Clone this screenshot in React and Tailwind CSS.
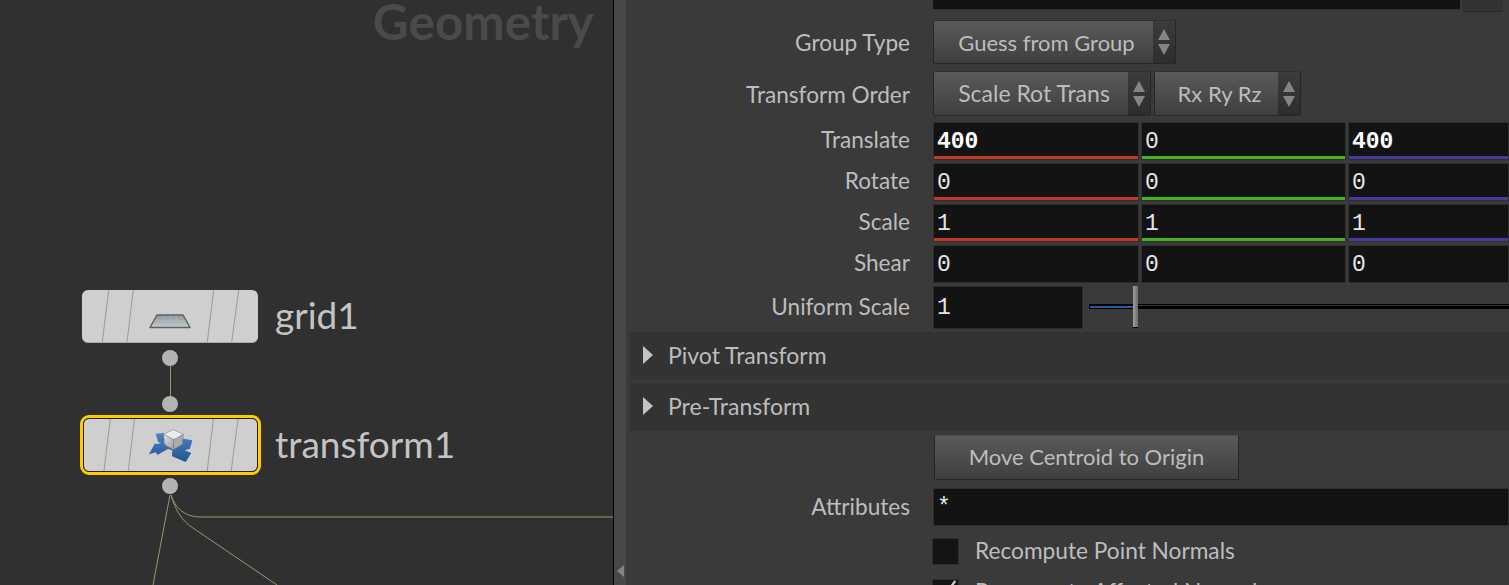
import React from 'react';

const sans = "font-['Lato',sans-serif]";
const mono = "font-['Liberation_Mono',monospace]";

// slanted strokes on a network node body
const Stripes = () => (
  <svg className="absolute inset-0 w-full h-full" viewBox="0 0 176 53" preserveAspectRatio="none">
    <path d="M26.7 0L20.3 53M51.3 0L45 53M131.7 0L125.3 53M156.7 0L149.7 53" stroke="#9a9a9a" strokeWidth="1" fill="none" />
  </svg>
);

const GridIcon = () => (
  <svg className="absolute left-[66px] top-[23px] w-[44px] h-[16px]" viewBox="0 0 44 16">
    <defs>
      <linearGradient id="gridFill" x1="0" y1="0" x2="0" y2="1">
        <stop offset="0" stopColor="#8e979c" />
        <stop offset="1" stopColor="#c6ccd0" />
      </linearGradient>
    </defs>
    <path d="M9 2H35L42 14.5H2Z" fill="url(#gridFill)" stroke="#606060" strokeWidth="1.5" strokeLinejoin="round" />
    <path d="M16 2.5L14 14M22 2.5V14M28 2.5L30 14M6 8H38" stroke="#b4babe" strokeWidth="0.6" fill="none" />
  </svg>
);

const TransformIcon = () => (
  <svg className="absolute left-[60px] top-[8px] w-[56px] h-[36px]" viewBox="40 20 168 108">
    <defs>
      <linearGradient id="cubeLeft" x1="0" y1="0" x2="1" y2="1">
        <stop offset="0" stopColor="#e6e6e6" />
        <stop offset="1" stopColor="#9c9c9c" />
      </linearGradient>
      <linearGradient id="planeBlue" x1="0" y1="0" x2="0" y2="1">
        <stop offset="0" stopColor="#4c82c4" />
        <stop offset="1" stopColor="#23558f" />
      </linearGradient>
    </defs>
    <path d="M100 38L75 40L82 64L90 70L72 70L55 102L76 96L80 104L112 86L125 90L124 108L165 125L182 98L162 90L178 85L185 60L150 54L150 70L100 70Z" fill="url(#planeBlue)" />
    <path d="M98 42L128 28L158 42L130 58Z" fill="#ededed" stroke="#777" strokeWidth="1.5" />
    <path d="M98 42L130 58L128 88L105 75Z" fill="url(#cubeLeft)" stroke="#777" strokeWidth="1.5" />
    <path d="M130 58L158 42L155 72L128 88Z" fill="#a9adb0" stroke="#777" strokeWidth="1.5" />
  </svg>
);

const Dot = ({ className }) => (
  <div className={`absolute w-[16px] h-[16px] rounded-full bg-[#b3b3b3] ${className}`} />
);

const Network = () => (
  <div className={`relative w-[613px] h-full shrink-0 bg-[#303030] overflow-hidden ${sans}`}>
    <div className="absolute right-[19px] top-[-9px] text-[49.5px] leading-[60px] font-bold text-[#4a4a4a]">Geometry</div>

    <svg className="absolute inset-0 w-[613px] h-[585px]" viewBox="0 0 613 585" fill="none" stroke="#8a9f68" strokeWidth="1">
      <path d="M170.5 366V397" />
      <path d="M170 495L153 585" />
      <path d="M171 495C175 508 185 517 200 517H613" />
      <path d="M171 495C175 510 183 522 193 528L277 585" />
    </svg>

    <div className="absolute left-[82px] top-[290px] w-[176px] h-[53px] rounded-[6px] bg-[#cfcfcf] overflow-hidden border-b border-[#a8a8a8]">
      <Stripes />
      <GridIcon />
    </div>
    <div className="absolute left-[275px] top-[289px] text-[37px] leading-[52px] text-[#c4c4c4]">grid1</div>
    <Dot className="left-[162px] top-[350px]" />
    <Dot className="left-[162px] top-[396px]" />

    <div className="absolute left-[80px] top-[415px] w-[181px] h-[60px] rounded-[9px] border-[3px] border-[#ffcc00]">
      <div className="relative w-full h-full rounded-[6px] bg-[#cfcfcf] border border-[#222222] overflow-hidden">
        <Stripes />
        <TransformIcon />
      </div>
    </div>
    <div className="absolute left-[275px] top-[418px] text-[37px] leading-[52px] text-[#c4c4c4]">transform1</div>
    <Dot className="left-[162px] top-[478px]" />
  </div>
);

const Label = ({ children, className = '' }) => (
  <div className={`w-[285px] shrink-0 pr-[1px] text-right text-[22.6px] leading-none text-[#bdbdbd] ${className}`}>{children}</div>
);

const Arrows = () => (
  <svg width="16" height="28" viewBox="0 0 16 28" className="shrink-0">
    <path d="M8 1L14 12H2Z M2 16H14L8 27Z" fill="#858585" />
  </svg>
);

const Select = ({ width, arrowWidth, size = 'text-[22px]', children }) => (
  <div className={`flex h-full rounded-[2px] border border-[#262626] border-t-[#303030] bg-gradient-to-b from-[#5a5a5a] to-[#3f3f3f] text-[#bdbdbd] ${size} ${width}`}>
    <div className="flex-1 text-center self-center pl-[6px] whitespace-nowrap">{children}</div>
    <div className={`flex items-center justify-center h-full bg-gradient-to-b from-[#3c3c3c] to-[#2d2d2d] ${arrowWidth}`}>
      <Arrows />
    </div>
  </div>
);

const Field = ({ value, bar, bold, className = 'w-[206px]' }) => (
  <div className={`relative h-full shrink-0 border border-[#2e2e2e] bg-[#131313] ${className}`}>
    <div className={`pl-[3px] pt-[4px] text-[23px] leading-[30px] ${mono} ${bold ? 'font-bold text-white' : 'text-[#e6e6e6]'}`}>{value}</div>
    {bar && <div className={`absolute left-0 right-0 bottom-0 h-[3px] ${bar}`} />}
  </div>
);

const VectorRow = ({ label, values, bold, bars, className }) => (
  <div className={`flex items-center h-[38px] ${className}`}>
    <Label className="pb-[2px]">{label}</Label>
    <div className="flex h-full gap-[2px] ml-[22px] flex-1">
      <Field value={values[0]} bold={bold && values[0] !== '0'} bar={bars && 'bg-[#c23a22]'} />
      <Field value={values[1]} bold={bold && values[1] !== '0'} bar={bars && 'bg-[#47b220]'} className="w-[205px]" />
      <Field value={values[2]} bold={bold && values[2] !== '0'} bar={bars && 'bg-[#443ba0]'} className="flex-1" />
    </div>
  </div>
);

const Folder = ({ label, className }) => (
  <div className={`flex items-center h-[48px] ml-[4px] pb-[2px] bg-[#333333] ${className}`}>
    <svg width="12" height="20" viewBox="0 0 12 20" className="ml-[12px] mr-[14px]">
      <path d="M1 1L11 10L1 19Z" fill="#c4c4c4" />
    </svg>
    <span className="text-[23px] text-[#bdbdbd]">{label}</span>
  </div>
);

const Parms = () => (
  <div className={`flex-1 min-w-0 h-full overflow-hidden bg-[#3a3a3a] ${sans}`}>
    <div className="flex items-start h-[44px] mt-[-34px]">
      <div className="self-center"><Label>Group</Label></div>
      <div className="ml-[22px] w-[527px] h-full bg-[#131313] border-b border-[#2e2e2e]" />
      <div className="ml-[2px] w-[41px] h-[46px] rounded-[2px] bg-[#333333] border-b border-[#262626]" />
    </div>

    <div className="flex items-center h-[44px] mt-[10px]">
      <Label className="pt-[2px]">Group Type</Label>
      <div className="ml-[22px] h-full">
        <Select width="w-[243px]" arrowWidth="w-[22px]">Guess from Group</Select>
      </div>
    </div>

    <div className="flex items-center h-[45px] mt-[7px]">
      <Label className="pt-[3px]">Transform Order</Label>
      <div className="flex gap-[3px] ml-[22px] h-full">
        <Select width="w-[218px]" arrowWidth="w-[22px]" size="text-[23px]">Scale Rot Trans</Select>
        <Select width="w-[147px]" arrowWidth="w-[22px]">Rx Ry Rz</Select>
      </div>
    </div>

    <VectorRow label="Translate" values={['400', '0', '400']} bold bars className="mt-[6px]" />
    <VectorRow label="Rotate" values={['0', '0', '0']} bars className="mt-[3px]" />
    <VectorRow label="Scale" values={['1', '1', '1']} bars className="mt-[3px]" />
    <VectorRow label="Shear" values={['0', '0', '0']} className="mt-[3px]" />

    <div className="flex items-center h-[43px] mt-[3px]">
      <Label>Uniform Scale</Label>
      <div className="ml-[22px] h-full">
        <Field value="1" className="w-[150px] pt-[2px]" />
      </div>
      <div className="relative flex-1 h-full ml-[6px]">
        <div className="absolute left-0 right-0 top-[18px] h-[5px] bg-black" />
        <div className="absolute left-[44px] right-0 top-[19px] h-[1px] bg-[#333333]" />
        <div className="absolute left-[1px] top-[20px] w-[43px] h-[2px] bg-[#1c5ea8]" />
        <div className="absolute left-[44px] top-0 w-[5px] h-[42px] bg-gradient-to-r from-[#a0a0a0] to-[#6c6c6c] border-b border-black" />
      </div>
    </div>

    <Folder label="Pivot Transform" className="mt-[3px]" />
    <Folder label="Pre-Transform" className="mt-[3px]" />

    <div className="h-[45px] mt-[4px] ml-[308px] w-[305px] pb-[2px] rounded-[2px] flex items-center justify-center border border-[#262626] border-t-[#4a4a4a] bg-gradient-to-b from-[#5a5a5a] to-[#3f3f3f] text-[22px] text-[#bdbdbd]">
      Move Centroid to Origin
    </div>

    <div className="flex items-center h-[38px] mt-[8px]">
      <Label>Attributes</Label>
      <div className="ml-[22px] flex-1 h-full">
        <Field value="*" className="w-full" />
      </div>
    </div>

    <div className="flex items-center h-[27px] mt-[12px] ml-[306px]">
      <div className="w-[27px] h-[27px] bg-[#141414] border border-[#2e2e2e]" />
      <span className="ml-[16px] text-[22.7px] text-[#bdbdbd]">Recompute Point Normals</span>
    </div>

    <div className="flex items-center h-[27px] mt-[14px] ml-[306px]">
      <div className="relative w-[27px] h-[27px] bg-[#141414] border border-[#2e2e2e]">
        <svg className="absolute inset-0" viewBox="0 0 27 27" fill="none">
          <path d="M5 13L11 19L24 1" stroke="#d0d0d0" strokeWidth="2.5" />
        </svg>
      </div>
      <span className="ml-[16px] text-[22.7px] text-[#bdbdbd]">Recompute Affected Normals</span>
    </div>
  </div>
);

export default function App() {
  return (
    <div className="flex w-[1509px] h-[585px] overflow-hidden bg-[#3a3a3a]">
      <Network />
      <div className="w-[1px] h-full shrink-0 bg-black" />
      <div className="relative w-[12px] h-full shrink-0 bg-[#484848]">
        <svg className="absolute left-[3px] top-[565px]" width="8" height="12" viewBox="0 0 8 12">
          <path d="M7 0V12L0 6Z" fill="#858585" />
        </svg>
      </div>
      <Parms />
    </div>
  );
}
